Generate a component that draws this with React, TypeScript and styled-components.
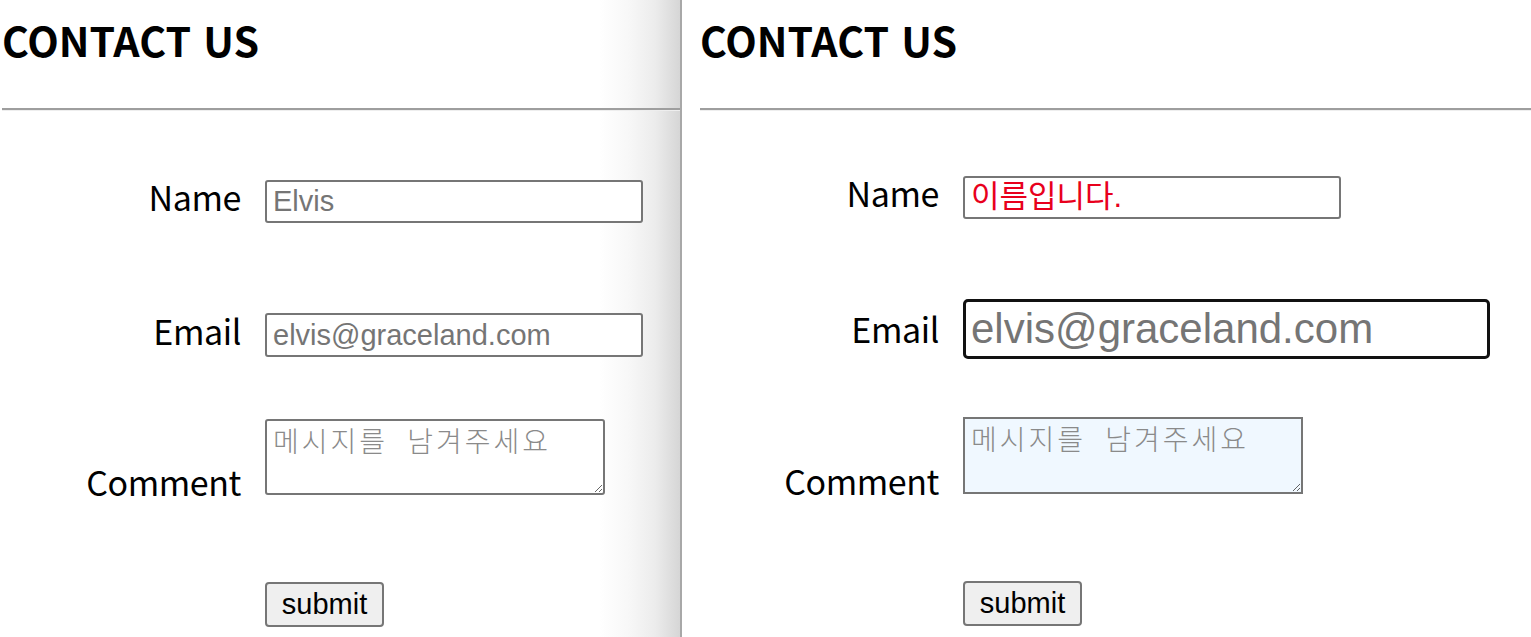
import React from "react";
import styled, { createGlobalStyle, css } from "styled-components";

const GlobalStyle = createGlobalStyle`
  html, body { margin: 0; padding: 0; background: #ffffff; }
  body { font-family: "Noto Sans CJK KR", "Noto Sans", sans-serif; color: #000; }
  * { box-sizing: border-box; }
`;

const Page = styled.div`
  display: flex;
  height: 637px;
  overflow: hidden;
`;

const Panel = styled.section<{ $side: "left" | "right" }>`
  display: flex;
  flex-direction: column;
  ${(p) =>
    p.$side === "left"
      ? css`
          width: 682px;
          flex: none;
          padding-left: 2px;
          border-right: 2px solid #a8a8a8;
          background: linear-gradient(
            to right,
            #ffffff 0,
            #ffffff 600px,
            #f7f7f7 630px,
            #ececec 655px,
            #d6d6d6 680px
          );
        `
      : css`
          flex: 1;
          padding-left: 18px;
        `}
`;

const Title = styled.h1`
  margin: 17px 0 0;
  font-family: "Noto Sans CJK KR", "Noto Sans", sans-serif;
  font-weight: 700;
  font-size: 41px;
  line-height: 44px;
  word-spacing: 3px;
  color: #000;
`;

const Rule = styled.hr`
  margin: 47px 0 0;
  height: 0;
  border: 0;
  border-top: 2px solid #9e9e9e;
  border-bottom: 1px solid #eeeeee;
`;

const Form = styled.form`
  display: flex;
  flex-direction: column;
`;

const Row = styled.div<{ $top: number; $end?: boolean }>`
  display: grid;
  grid-template-columns: 239px auto;
  column-gap: 24px;
  justify-content: start;
  align-items: ${(p) => (p.$end ? "end" : "baseline")};
  margin-top: ${(p) => p.$top}px;
`;

const Label = styled.label<{ $end?: boolean }>`
  text-align: right;
  font-family: "Noto Sans CJK KR", "Noto Sans", sans-serif;
  font-size: 34px;
  line-height: 1;
  letter-spacing: -0.4px;
  color: #000;
  ${(p) => p.$end && css`margin-bottom: -4px;`}
`;

const Field = styled.input<{ $w: number; $h: number; $strong?: boolean; $alert?: boolean }>`
  width: ${(p) => p.$w}px;
  height: ${(p) => p.$h}px;
  margin: 0;
  font-family: "Liberation Sans", "Noto Sans CJK KR", sans-serif;
  background: #fff;
  outline: none;
  ${(p) =>
    p.$strong
      ? css`
          border: 3px solid #111111;
          border-radius: 5px;
          padding: 0 5px;
          font-size: 42px;
        `
      : css`
          border: 2px solid #767676;
          border-radius: 3px;
          padding: 0 6px;
          font-size: 29px;
        `}
  &::placeholder {
    color: ${(p) => (p.$alert ? "#e8001c" : "#757575")};
    font-size: ${(p) => (p.$alert ? "31px" : "inherit")};
    opacity: 1;
  }
`;

const Message = styled.textarea<{ $h: number; $tint?: boolean }>`
  width: 340px;
  height: ${(p) => p.$h}px;
  margin: 0;
  padding: 3px 6px;
  border: 2px solid #767676;
  border-radius: ${(p) => (p.$tint ? "0" : "3px")};
  background: ${(p) => (p.$tint ? "#f0f8ff" : "#ffffff")};
  font-family: "Noto Sans CJK KR", sans-serif;
  font-weight: 300;
  font-size: 28px;
  letter-spacing: 3px;
  word-spacing: 10px;
  line-height: 1.2;
  outline: none;
  &::placeholder {
    color: #8a8a8a;
    opacity: 1;
  }
`;

const Submit = styled.button`
  width: 119px;
  height: 45px;
  margin: 0;
  padding: 0;
  background: #efefef;
  border: 2px solid #767676;
  border-radius: 4px;
  font-family: "Liberation Sans", Arial, sans-serif;
  font-size: 29px;
  color: #000;
`;

type Spec = {
  side: "left" | "right";
  tops: [number, number, number, number];
  nameH: number;
  namePh: string;
  nameAlert?: boolean;
  emailW: number;
  emailH: number;
  emailStrong?: boolean;
  areaH: number;
  tint?: boolean;
};

function ContactPanel(s: Spec) {
  return (
    <Panel $side={s.side}>
      <Title>CONTACT US</Title>
      <Rule />
      <Form onSubmit={(e) => e.preventDefault()}>
        <Row $top={s.tops[0]}>
          <Label>Name</Label>
          <Field $w={378} $h={s.nameH} placeholder={s.namePh} $alert={s.nameAlert} />
        </Row>
        <Row $top={s.tops[1]}>
          <Label>Email</Label>
          <Field
            $w={s.emailW}
            $h={s.emailH}
            $strong={s.emailStrong}
            placeholder="elvis@graceland.com"
          />
        </Row>
        <Row $top={s.tops[2]} $end>
          <Label $end>Comment</Label>
          <Message $h={s.areaH} $tint={s.tint} placeholder="메시지를 남겨주세요" />
        </Row>
        <Row $top={s.tops[3]}>
          <span />
          <Submit type="submit">submit</Submit>
        </Row>
      </Form>
    </Panel>
  );
}

export default function App() {
  return (
    <>
      <GlobalStyle />
      <Page>
        <ContactPanel
          side="left"
          tops={[69, 90, 62, 87]}
          nameH={43}
          namePh="Elvis"
          emailW={378}
          emailH={44}
          areaH={76}
        />
        <ContactPanel
          side="right"
          tops={[65, 80, 58, 87]}
          nameH={43}
          namePh="이름입니다."
          nameAlert
          emailW={527}
          emailH={60}
          emailStrong
          areaH={77}
          tint
        />
      </Page>
    </>
  );
}
